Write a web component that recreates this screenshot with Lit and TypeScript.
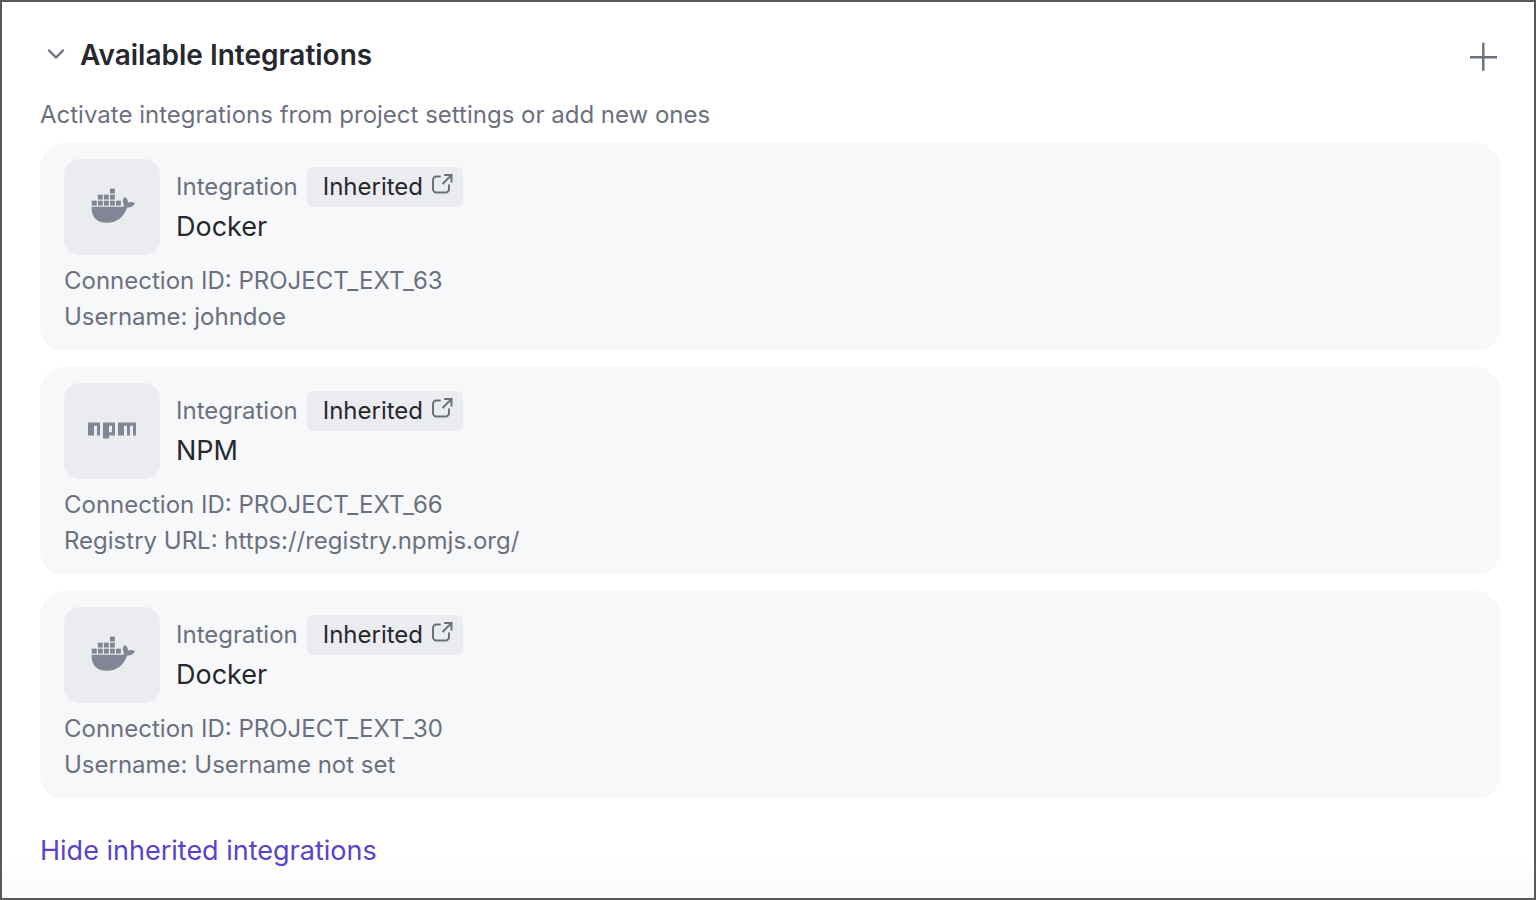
import { LitElement, html, css, svg } from "lit";
import { customElement, property, state } from "lit/decorators.js";

type IntegrationKind = "docker" | "npm";

interface Integration {
  kind: IntegrationKind;
  name: string;
  details: { label: string; value: string }[];
}

const INTEGRATIONS: Integration[] = [
  {
    kind: "docker",
    name: "Docker",
    details: [
      { label: "Connection ID", value: "PROJECT_EXT_63" },
      { label: "Username", value: "johndoe" },
    ],
  },
  {
    kind: "npm",
    name: "NPM",
    details: [
      { label: "Connection ID", value: "PROJECT_EXT_66" },
      { label: "Registry URL", value: "https://registry.npmjs.org/" },
    ],
  },
  {
    kind: "docker",
    name: "Docker",
    details: [
      { label: "Connection ID", value: "PROJECT_EXT_30" },
      { label: "Username", value: "Username not set" },
    ],
  },
];

// Containers stacked on the whale: [column, row], row 0 is the top one.
const CONTAINERS = [
  [3, 0],
  [1, 1], [2, 1], [3, 1],
  [0, 2], [1, 2], [2, 2], [3, 2], [4, 2],
];

const dockerLogo = html`
  <svg width="48" height="48" viewBox="0 0 48 48" fill="currentColor" aria-hidden="true">
    ${CONTAINERS.map(
      ([col, row]) => svg`<rect x=${3.8 + col * 6.05} y=${5.6 + row * 6.05} width="4.9" height="4.9" />`
    )}
    <path d="M3.6 23.8H33C35 23.8 35.8 23.4 36.2 22.8C34.2 19.8 34.4 16.4 36.6 13.8C38.8 15.2 40.1 17.2 40 19.5C42.4 18.6 45 18.8 47 20.1C45.5 23.5 42.5 24.7 39.2 24.6C35.9 34 29.2 39.8 19 39.8C8.8 39.8 3 34 3.6 23.8Z" />
  </svg>
`;

const npmLogo = html`
  <svg width="48" height="48" viewBox="0 0 48 48" fill="currentColor" aria-hidden="true">
    <path d="M0 15.6H12V28.4H9V18.8H6V28.4H0Z" />
    <path fill-rule="evenodd" d="M15 15.6H27V28.4H21V31.4H15ZM21 18.8V25.2H24V18.8Z" />
    <path d="M30 15.6H48V28.4H45V18.8H42V28.4H39V18.8H36V28.4H30Z" />
  </svg>
`;

@customElement("integration-card")
export class IntegrationCard extends LitElement {
  @property({ attribute: false }) integration!: Integration;

  static styles = css`
    :host {
      display: block;
    }
    .card {
      padding: 16px 24px;
      border-radius: 24px;
      background: #f7f8fa;
      color: #6c707e;
      font-size: 24px;
      line-height: 36px;
    }
    .head {
      display: flex;
      align-items: center;
      gap: 16px;
      margin-bottom: 8px;
    }
    .tile {
      display: grid;
      place-items: center;
      width: 96px;
      height: 96px;
      border-radius: 16px;
      background: #ebecf0;
      color: #818594;
    }
    .kind {
      display: flex;
      align-items: center;
      gap: 9px;
      line-height: 40px;
    }
    .badge {
      display: flex;
      align-items: center;
      gap: 8px;
      padding: 0 8px 0 16px;
      border-radius: 6px;
      background: #ebecf0;
      color: #27282e;
      text-decoration: none;
    }
    .badge svg {
      margin-bottom: 4px;
      color: #6c707e;
    }
    .name {
      margin: 0;
      color: #27282e;
      font-size: 27px;
      font-weight: 400;
      line-height: 40px;
    }
    .detail {
      margin: 0;
    }
  `;

  render() {
    const { kind, name, details } = this.integration;
    return html`
      <article class="card">
        <div class="head">
          <div class="tile">${kind === "docker" ? dockerLogo : npmLogo}</div>
          <div>
            <div class="kind">
              <span>Integration</span>
              <a class="badge" href="#project-settings">
                Inherited
                <svg width="24" height="24" viewBox="0 0 24 24" fill="none" stroke="currentColor" stroke-width="2" aria-hidden="true">
                  <path d="M9.8 3.5H5.5A3.5 3.5 0 0 0 2 7v9A3.5 3.5 0 0 0 5.500 19.500H14.500A3.500 3.500 0 0 0 18 16v-4.500M13 2H20.500V9.500M20 2.500l-8.500 8.500" />
                </svg>
              </a>
            </div>
            <h3 class="name">${name}</h3>
          </div>
        </div>
        ${details.map((d) => html`<p class="detail">${d.label}: ${d.value}</p>`)}
      </article>
    `;
  }
}

@customElement("app-root")
export class AppRoot extends LitElement {
  @state() private expanded = true;
  @state() private showInherited = true;

  static styles = css`
    :host {
      display: block;
      font-family: Inter, "Liberation Sans", sans-serif;
    }
    .panel {
      box-sizing: border-box;
      min-height: 100vh;
      padding: 31px 34px 24px 38px;
      border: 2px solid #5a5859;
      background: linear-gradient(to top, #fafafa, #ffffff 40px);
      color: #27282e;
    }
    button {
      padding: 0;
      border: 0;
      background: none;
      color: inherit;
      font: inherit;
      cursor: pointer;
    }
    .header {
      display: flex;
      align-items: center;
      justify-content: space-between;
    }
    .title {
      margin: 0;
      font-size: 28px;
      font-weight: 600;
      line-height: 44px;
    }
    .toggle {
      display: flex;
      align-items: center;
      gap: 8px;
    }
    .toggle svg,
    .add {
      color: #6c707e;
    }
    .add svg {
      display: block;
    }
    .hint {
      margin: 20px 0 10px;
      color: #6c707e;
      font-size: 24px;
      line-height: 36px;
    }
    .list {
      display: grid;
      gap: 16px;
    }
    .link {
      margin-top: 32px;
      color: #5a43c8;
      font-size: 27px;
      line-height: 40px;
    }
  `;

  render() {
    return html`
      <section class="panel">
        <header class="header">
          <h2 class="title">
            <button class="toggle" aria-expanded=${this.expanded} @click=${() => (this.expanded = !this.expanded)}>
              <svg width="32" height="32" viewBox="0 0 32 32" fill="none" stroke="currentColor" stroke-width="2.4" stroke-linecap="round" stroke-linejoin="round" aria-hidden="true">
                <path d="M9 11.500l7 7 7-7" />
              </svg>
              Available Integrations
            </button>
          </h2>
          <button class="add" aria-label="Add integration">
            <svg width="36" height="36" viewBox="0 0 36 36" fill="none" stroke="currentColor" stroke-width="2.4" aria-hidden="true">
              <path d="M19.3 5.800v28M6 20.200h27" />
            </svg>
          </button>
        </header>
        ${this.expanded
          ? html`
              <p class="hint">Activate integrations from project settings or add new ones</p>
              <div class="list">
                ${this.showInherited
                  ? INTEGRATIONS.map((i) => html`<integration-card .integration=${i}></integration-card>`)
                  : null}
              </div>
              <button class="link" @click=${() => (this.showInherited = !this.showInherited)}>
                ${this.showInherited ? "Hide" : "Show"} inherited integrations
              </button>
            `
          : null}
      </section>
    `;
  }
}
